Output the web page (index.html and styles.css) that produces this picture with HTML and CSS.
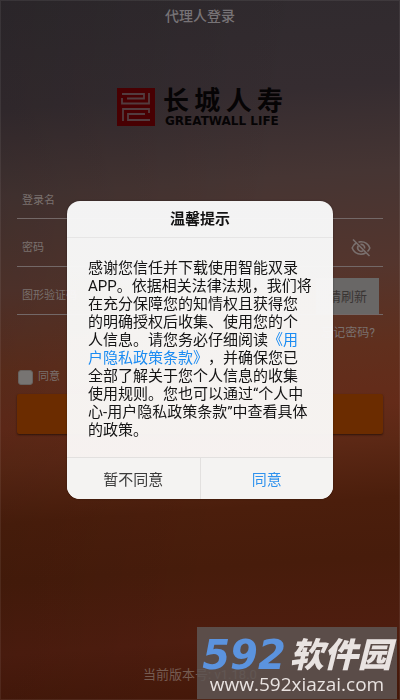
FILE: index.html
```
<!DOCTYPE html>
<html lang="zh-CN">
<head>
<meta charset="utf-8">
<meta name="viewport" content="width=device-width, initial-scale=1">
<title>代理人登录</title>
<link rel="stylesheet" href="styles.css">
</head>
<body>
<div class="page">
  <header class="topbar"><h1>代理人登录</h1></header>
  <div class="logo">
    <svg class="seal" viewBox="0 0 38 38" aria-hidden="true">
      <rect width="38" height="38" fill="#480002"/>
      <g fill="none" stroke="#523c3f" stroke-width="1.800">
        <path d="M5 6H27V10.500H10"/>
        <path d="M32 5V15.500H5V10"/>
        <path d="M6 33V21H32V25"/>
        <path d="M33 32H11V26H28"/>
      </g>
    </svg>
    <div class="brand">
      <div class="brand-cn"><span>长</span><span>城</span><span>人</span><span>寿</span></div>
      <div class="brand-en">GREATWALL LIFE</div>
    </div>
  </div>
  <form class="form">
    <div class="field"><input type="text" aria-label="登录名" placeholder="登录名"></div>
    <div class="field">
      <input type="password" aria-label="密码" placeholder="密码">
      <button type="button" class="eye" aria-label="显示密码">
        <svg viewBox="0 0 20 20" fill="none" stroke="#7a706e" stroke-width="1.600" aria-hidden="true">
          <path d="M5.500 4.800C3.500 6 2 7.700 1.200 10C2.600 13.700 6 16.200 10 16.200C11.700 16.200 13.300 15.800 14.600 15M7.500 4.100C8.300 3.900 9.100 3.800 10 3.800C14 3.800 17.400 6.300 18.800 10C18.300 11.400 17.500 12.500 16.500 13.500"/>
          <path d="M7.300 7.700A3.600 3.600 0 0 0 12.300 12.700M9.500 6.400A3.600 3.600 0 0 1 13.600 10.500"/>
          <path d="M2 1.500L18.500 18"/>
        </svg>
      </button>
    </div>
    <div class="field captcha">
      <input type="text" aria-label="图形验证码" placeholder="图形验证码">
      <button type="button" class="refresh">请刷新</button>
    </div>
    <a class="forgot" href="#">忘记密码?</a>
    <label class="agree"><input type="checkbox"><span>同意</span></label>
    <button type="submit" class="submit" aria-label="登录"></button>
  </form>
  <footer class="version">当前版本号: v1.18.0</footer>
</div>

<div class="overlay">
  <section class="dialog" role="dialog" aria-modal="true" aria-labelledby="dlg-title">
    <h2 id="dlg-title">温馨提示</h2>
    <p class="message">感谢您信任并下载使用智能双录APP。依据相关法律法规，我们将在充分保障您的知情权且获得您的明确授权后收集、使用您的个人信息。请您务必仔细阅读<a href="#">《用户隐私政策条款》</a>，并确保您已全部了解关于您个人信息的收集使用规则。您也可以通过“个人中心-用户隐私政策条款”中查看具体的政策。</p>
    <div class="actions">
      <button type="button">暂不同意</button>
      <button type="button" class="primary">同意</button>
    </div>
  </section>
</div>

<aside class="watermark">
  <div class="mark-name"><span class="mark-num">592</span><span class="mark-cn">软件园</span></div>
  <div class="mark-url">www.592xiazai.com</div>
</aside>
</body>
</html>
```
FILE: styles.css
```
* { box-sizing: border-box; }
body {
  margin: 0;
  font-family: Roboto, "Noto Sans CJK SC", sans-serif;
  color: #7a706e;
}
h1, h2, p { margin: 0; }
button, input { font: inherit; color: inherit; }
button { border: 0; padding: 0; background: none; }
a { text-decoration: none; color: inherit; }

.page {
  min-height: 100vh;
  display: flex;
  flex-direction: column;
  box-shadow: inset 0 0 0 1px rgba(255, 255, 255, 0.07);
  background:
    linear-gradient(100deg, rgba(0, 0, 0, 0.12), rgba(0, 0, 0, 0) 60%),
    linear-gradient(176deg, #2f2a2e 0%, #352c30 15%, #463533 27%, #54352d 40%, #602f1d 51%, #642b19 59%, #5c2815 64%, #4b1e0c 72%, #471c0b 80%, #4e1d0f 90%, #421708 100%);
}

.topbar { padding-top: 5px; text-align: center; }
.topbar h1 { font-size: 14px; line-height: 22px; font-weight: 500; color: #777376; }

.logo {
  display: flex;
  justify-content: center;
  gap: 8px;
  margin-top: 61px;
}
.seal { width: 38px; height: 38px; }
.brand { width: 120px; color: #060405; }
.brand-cn {
  display: flex;
  justify-content: space-between;
  font-size: 26px;
  line-height: 27px;
  font-weight: 700;
}
.brand-en {
  padding-left: 2px;
  font-family: "DejaVu Sans", sans-serif;
  font-size: 12px;
  line-height: 12px;
  font-weight: 700;
  white-space: nowrap;
}

.form {
  display: flex;
  flex-direction: column;
  padding: 0 17px;
  margin-top: 54px;
}
.field {
  display: flex;
  align-items: center;
  height: 48px;
  padding: 10px 4px 0 5px;
  border-bottom: 1px solid #736867;
}
.field:first-child { height: 38px; padding-top: 2px; }
.field input {
  flex: 1;
  min-width: 0;
  border: 0;
  padding: 0;
  background: none;
  outline: 0;
  font-size: 11px;
  line-height: 20px;
}
.field input::placeholder { color: #7a706e; opacity: 1; }
.eye { display: flex; margin-right: 8px; }
.eye svg { width: 20px; height: 20px; }
.refresh {
  height: 36px;
  padding: 0 12px;
  background: #696766;
  color: #393534;
  font-size: 13px;
}
.forgot {
  align-self: flex-end;
  margin-top: 8px;
  padding-right: 8px;
  font-size: 12px;
  line-height: 20px;
}
.agree {
  display: flex;
  align-items: center;
  align-self: flex-start;
  gap: 5px;
  margin-top: 24px;
  padding-left: 1px;
  font-size: 11px;
  line-height: 20px;
}
.agree input {
  appearance: none;
  width: 15px;
  height: 15px;
  margin: 0;
  border: 1px solid #67625f;
  border-radius: 3px;
  background: #777472;
}
.submit {
  height: 40px;
  margin-top: 7px;
  border-radius: 2px;
  background: #6b2c00;
  box-shadow: 0 1px 2px rgba(0, 0, 0, 0.5);
}
.version {
  margin-top: auto;
  padding-bottom: 15px;
  text-align: center;
  font-size: 13px;
  line-height: 20px;
  color: #755b51;
}

.overlay {
  position: fixed;
  inset: 0;
  display: flex;
  align-items: center;
  justify-content: center;
  padding: 0 67px;
}
.dialog {
  flex: 1;
  max-width: 400px;
  border-radius: 13px;
  overflow: hidden;
  background: linear-gradient(rgba(247, 247, 247, 0.98), rgba(249, 246, 244, 0.98));
  color: #141414;
  box-shadow: 0 0 2px rgba(0, 0, 0, 0.4);
}
.dialog h2 {
  height: 37px;
  border-bottom: 1px solid #e6e5e5;
  text-align: center;
  font-size: 15px;
  line-height: 36px;
  font-weight: 700;
}
.message {
  padding: 21px 21px 18px;
  font-size: 15px;
  line-height: 18px;
  text-spacing-trim: space-all;
}
.message a { color: #1b8cf2; }
.actions {
  display: flex;
  border-top: 1px solid #e2e0df;
  background: #f4f3f2;
}
.actions button {
  flex: 1;
  height: 41px;
  font-size: 15px;
  color: #3b3b3b;
}
.actions .primary { border-left: 1px solid #e2e0df; color: #2f92ee; }

.watermark {
  position: fixed;
  right: 3px;
  bottom: 1px;
  width: 200px;
  padding-top: 10px;
  height: 72px;
  background: rgba(94, 86, 84, 0.85);
  color: #e9e3e1;
}
.mark-name {
  display: flex;
  align-items: center;
  justify-content: center;
  gap: 4px;
  height: 36px;
  font-style: italic;
  font-weight: 900;
}
.mark-num {
  font-family: "DejaVu Sans", sans-serif;
  font-size: 40px;
  line-height: 36px;
  font-weight: 700;
  color: #5b93de;
}
.mark-cn { font-size: 34px; line-height: 36px; }
.mark-url {
  text-align: center;
  font-family: "Open Sans", sans-serif;
  font-size: 19px;
  line-height: 22px;
  font-weight: 500;
}
```
